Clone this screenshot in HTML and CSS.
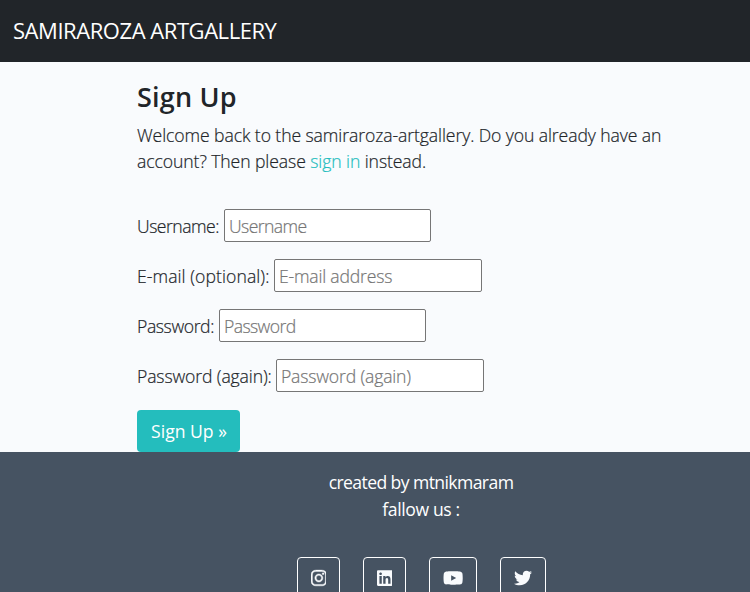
FILE: index.html
```html
<!DOCTYPE html>
<html lang="en">
<head>
<meta charset="utf-8">
<title>Sign Up</title>
<link rel="stylesheet" href="styles.css">
</head>
<body>
<nav class="navbar"><a class="brand">SAMIRAROZA ARTGALLERY</a></nav>
<main class="content">
  <h3 class="title">Sign Up</h3>
  <p class="intro"><span class="line-one">Welcome back to the samiraroza-artgallery. Do you already have an</span> <span class="line-two">account? Then please <a class="link">sign in</a> instead.</span></p>
  <form class="form">
    <div class="field"><label class="label label-user" for="u">Username:</label><input id="u" class="input input-user" placeholder="Username"></div>
    <div class="field"><label class="label label-mail" for="e">E-mail (optional):</label><input id="e" class="input input-mail" placeholder="E-mail address"></div>
    <div class="field"><label class="label label-pass" for="p">Password:</label><input id="p" type="password" class="input input-pass" placeholder="Password"></div>
    <div class="field"><label class="label label-again" for="q">Password (again):</label><input id="q" type="password" class="input input-again" placeholder="Password (again)"></div>
    <button class="button" type="button">Sign Up »</button>
  </form>
</main>
<footer class="footer">
  <p class="credit">created by mtnikmaram</p>
  <p class="follow">fallow us :</p>
  <div class="social">
    <a class="icon-button"><svg class="icon icon-instagram" viewBox="0 0 448 512"><path d="M224.1 141c-63.600 0-114.900 51.300-114.900 114.900s51.300 114.900 114.900 114.900S339 319.500 339 255.900 287.700 141 224.100 141zm0 189.600c-41.100 0-74.700-33.500-74.700-74.700s33.500-74.700 74.700-74.700 74.700 33.500 74.700 74.700-33.600 74.700-74.700 74.700zm146.400-194.300c0 14.900-12 26.800-26.800 26.800-14.900 0-26.800-12-26.800-26.800s12-26.800 26.800-26.800 26.800 12 26.800 26.800zm76.100 27.200c-1.700-35.900-9.900-67.700-36.200-93.900-26.200-26.200-58-34.400-93.900-36.200-37-2.100-147.900-2.100-184.900 0-35.800 1.700-67.600 9.900-93.900 36.100s-34.400 58-36.200 93.900c-2.100 37-2.100 147.900 0 184.900 1.700 35.900 9.900 67.700 36.200 93.900s58 34.400 93.900 36.200c37 2.100 147.900 2.100 184.900 0 35.900-1.700 67.700-9.900 93.900-36.200 26.200-26.200 34.400-58 36.200-93.900 2.100-37 2.100-147.800 0-184.800zM398.800 388c-7.800 19.600-22.900 34.700-42.600 42.600-29.500 11.700-99.500 9-132.100 9s-102.700 2.600-132.100-9c-19.600-7.800-34.700-22.900-42.600-42.600-11.700-29.500-9-99.500-9-132.100s-2.600-102.700 9-132.100c7.800-19.600 22.900-34.700 42.600-42.600 29.500-11.700 99.500-9 132.100-9s102.700-2.600 132.100 9c19.600 7.800 34.700 22.900 42.600 42.600 11.700 29.500 9 99.500 9 132.100s2.700 102.700-9 132.100z"/></svg></a>
    <a class="icon-button"><svg class="icon" viewBox="0 0 448 512"><path d="M416 32H31.900C14.300 32 0 46.500 0 64.300v383.400C0 465.500 14.300 480 31.900 480H416c17.600 0 32-14.500 32-32.300V64.300c0-17.800-14.400-32.300-32-32.300zM135.400 416H69V202.200h66.500V416zm-33.200-243c-21.300 0-38.500-17.300-38.500-38.500S80.900 96 102.200 96c21.200 0 38.500 17.300 38.500 38.500 0 21.300-17.200 38.500-38.500 38.500zm282.100 243h-66.400V312c0-24.800-.5-56.700-34.500-56.700-34.600 0-39.900 27-39.900 54.900V416h-66.400V202.200h63.700v29.200h.9c8.900-16.800 30.600-34.500 62.900-34.500 67.200 0 79.700 44.300 79.700 101.900V416z"/></svg></a>
    <a class="icon-button"><svg class="icon" viewBox="0 0 576 512"><path d="M549.700 124.100c-6.300-23.700-24.800-42.300-48.300-48.600C458.800 64 288 64 288 64S117.200 64 74.600 75.500c-23.500 6.300-42 24.900-48.300 48.600-11.400 42.900-11.400 132.300-11.400 132.300s0 89.400 11.400 132.300c6.300 23.700 24.800 41.500 48.300 47.800C117.200 448 288 448 288 448s170.800 0 213.400-11.500c23.500-6.300 42-24.200 48.300-47.800 11.400-42.900 11.400-132.300 11.400-132.300s0-89.400-11.400-132.300zM232.200 337.600V175.200l142.700 81.200-142.700 81.200z"/></svg></a>
    <a class="icon-button"><svg class="icon" viewBox="0 0 512 512"><path d="M459.400 151.700c.3 4.500.3 9.100.3 13.600 0 138.700-105.600 298.600-298.600 298.600-59.500 0-114.700-17.200-161.100-47.100 8.400 1 16.600 1.300 25.300 1.300 49.100 0 94.200-16.600 130.300-44.800-46.100-1-84.800-31.200-98.100-72.800 6.500 1 13 1.600 19.800 1.600 9.400 0 18.800-1.300 27.600-3.600-48.100-9.700-84.100-52-84.100-103v-1.300c14 7.800 30.200 12.700 47.400 13.300-28.300-18.800-46.800-51-46.800-87.400 0-19.500 5.200-37.400 14.300-53 51.700 63.700 129.300 105.300 216.400 109.800-1.600-7.800-2.600-15.900-2.600-24 0-57.800 46.800-104.900 104.900-104.900 30.200 0 57.500 12.700 76.700 33.100 23.700-4.500 46.500-13.300 66.600-25.300-7.800 24.400-24.400 44.800-46.100 57.800 21.100-2.300 41.600-8.100 60.400-16.200-14.300 20.800-32.200 39.300-52.600 54.300z"/></svg></a>
  </div>
</footer>
</body>
</html>
```
FILE: styles.css
```css
* { box-sizing: border-box; }
body {
  margin: 0;
  height: 592px;
  overflow: hidden;
  background: #f9fbfd;
  color: #212529;
  font: 300 17.6px/26.4px "Open Sans", "Noto Sans", sans-serif;
}
.navbar { display: flex; align-items: center; height: 62px; padding: 0 13px 2px; background: #212529; }
.brand { color: #fff; font-size: 22px; font-weight: 400; letter-spacing: -0.45px; white-space: nowrap; }
.content { height: 390px; padding: 17px 0 0 137px; }
.title { margin: 0; height: 43px; font-size: 27px; line-height: 36px; font-weight: 600; letter-spacing: 0.2px; }
.intro { margin: 0 0 35px; white-space: nowrap; letter-spacing: -0.09px; }
.intro, .label, .input { -webkit-text-stroke-width: 0.2px; }
.line-one, .line-two { display: block; }
.link { color: #24bdbd; }
.field { display: flex; align-items: center; height: 32px; margin-bottom: 18px; }
.label { flex: none; white-space: nowrap; }
.label-user { width: 87px; letter-spacing: -0.5px; }
.label-mail { width: 137px; letter-spacing: 0.07px; }
.label-pass { width: 82px; letter-spacing: -0.4px; }
.label-again { width: 139px; letter-spacing: -0.13px; }
.input {
  width: 208px; height: 33px; padding: 1px 4px;
  border: 1px solid #767676; border-radius: 2px;
  background: #fff; font: inherit;
}
.input::placeholder { color: #757575; }
.input-user, .input-pass { width: 207px; letter-spacing: -0.6px; }
.input-mail { letter-spacing: -0.2px; }
.input-again { letter-spacing: -0.17px; }
.button {
  display: block; width: 103px; height: 42px; padding: 0 0 0 1px;
  border: 0; border-radius: 4px; background: #24bdbd; color: #fff;
  font: inherit; font-weight: 400;
}
.footer { height: 140px; padding: 17px 0 0 92px; overflow: hidden; background: #465362; color: #fff; font-weight: 400; text-align: center; }
.credit, .follow { margin: 0; line-height: 27px; }
.credit { letter-spacing: -0.6px; }
.follow { letter-spacing: -0.4px; }
.social { display: flex; justify-content: center; gap: 23px; margin-top: 34px; }
.icon-button { display: flex; justify-content: center; width: 43px; height: 44px; padding: 11px 0 0 1px; border: 1px solid #fff; border-radius: 4px; }
.icon-button:nth-child(3) { width: 48px; }
.icon-button:nth-child(4) { width: 46px; padding-left: 0; }
.icon { height: 18px; fill: #f9fbfd; }
.icon-instagram { stroke: #f9fbfd; stroke-width: 12; }
```
